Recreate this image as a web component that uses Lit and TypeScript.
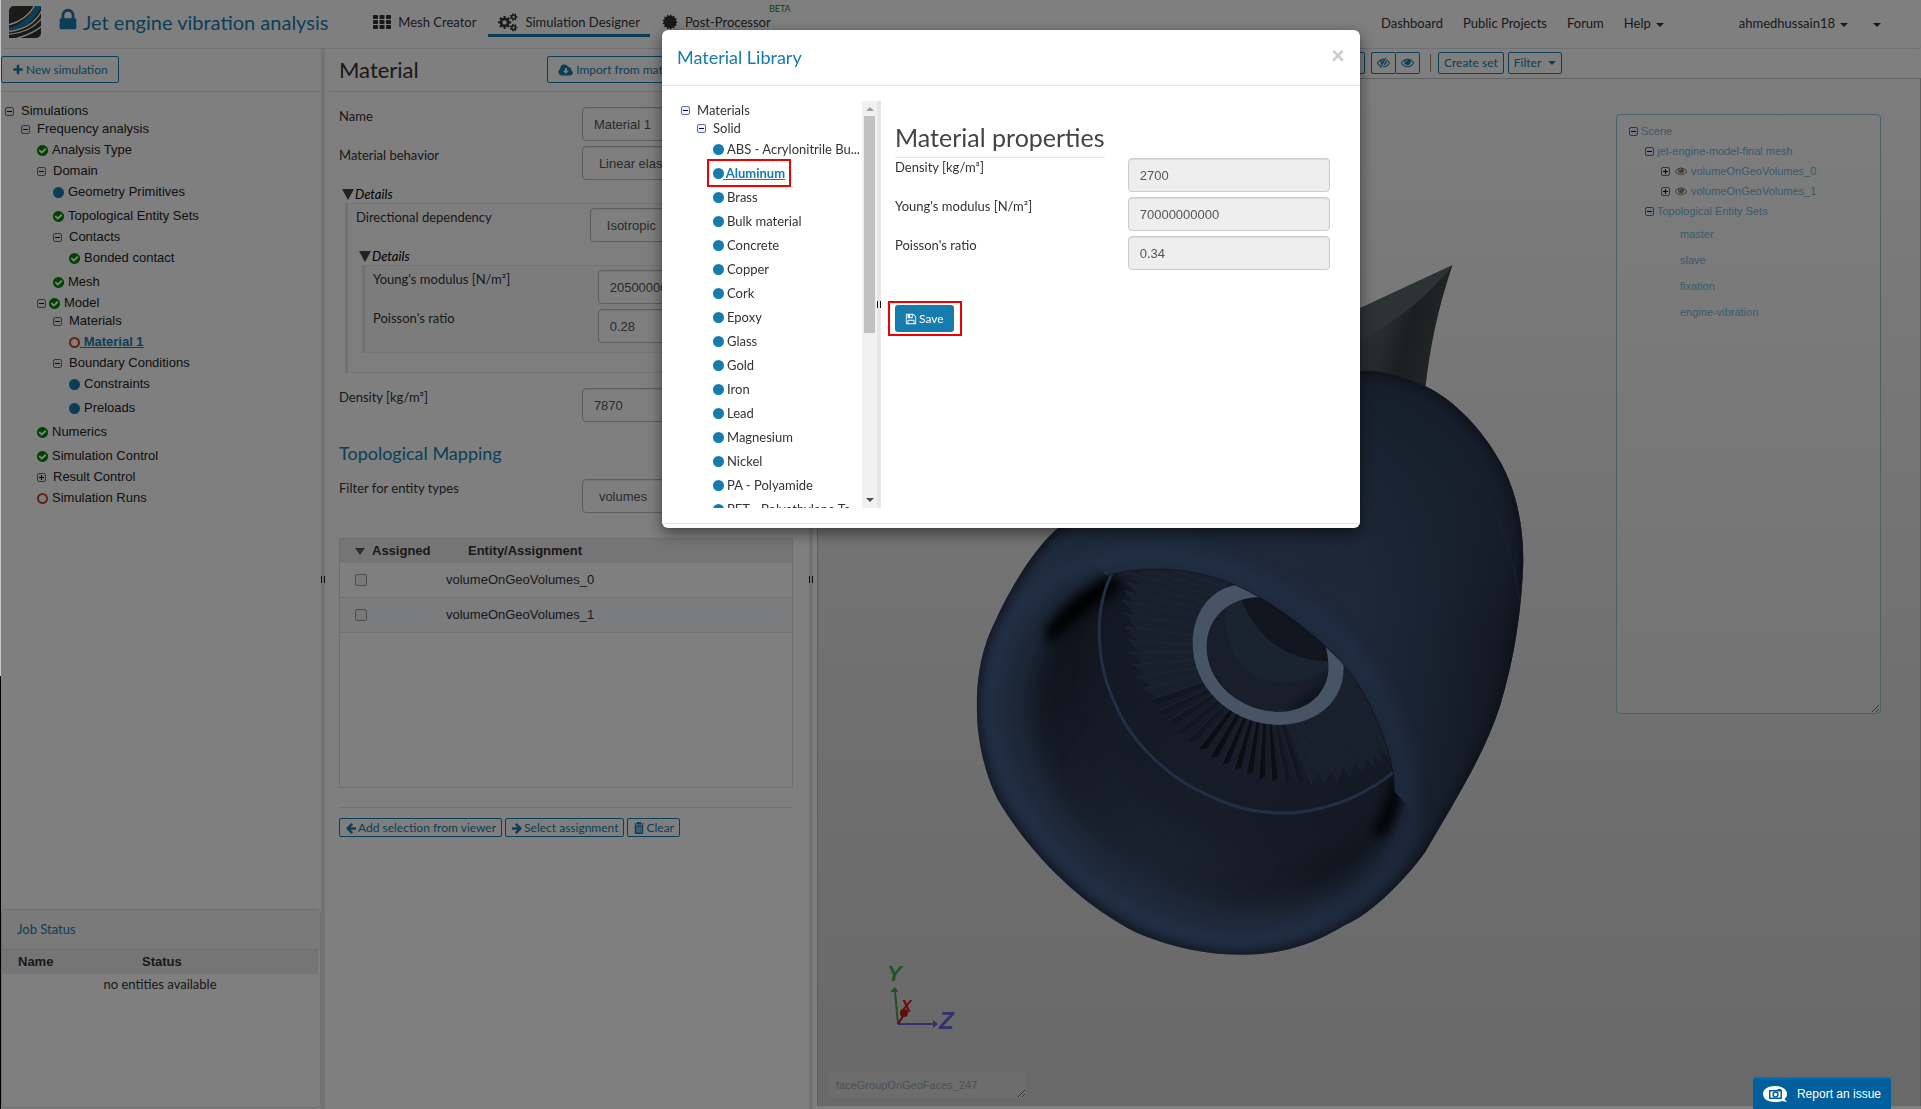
import { LitElement, html, svg, css, nothing } from "lit";
import { customElement } from "lit/decorators.js";

type Mark = "ok" | "dot" | "ring" | "eye";
interface Row {
  level: number;
  label: string;
  toggle?: "minus" | "plus";
  mark?: Mark;
  active?: boolean;
  boxed?: boolean;
}

const SIM_TREE: Row[] = [
  { level: 0, label: "Simulations", toggle: "minus" },
  { level: 1, label: "Frequency analysis", toggle: "minus" },
  { level: 2, label: "Analysis Type", mark: "ok" },
  { level: 2, label: "Domain", toggle: "minus" },
  { level: 3, label: "Geometry Primitives", mark: "dot" },
  { level: 3, label: "Topological Entity Sets", mark: "ok" },
  { level: 3, label: "Contacts", toggle: "minus" },
  { level: 4, label: "Bonded contact", mark: "ok" },
  { level: 3, label: "Mesh", mark: "ok" },
  { level: 2, label: "Model", toggle: "minus", mark: "ok" },
  { level: 3, label: "Materials", toggle: "minus" },
  { level: 4, label: "Material 1", mark: "ring", active: true },
  { level: 3, label: "Boundary Conditions", toggle: "minus" },
  { level: 4, label: "Constraints", mark: "dot" },
  { level: 4, label: "Preloads", mark: "dot" },
  { level: 2, label: "Numerics", mark: "ok" },
  { level: 2, label: "Simulation Control", mark: "ok" },
  { level: 2, label: "Result Control", toggle: "plus" },
  { level: 2, label: "Simulation Runs", mark: "ring" },
];

const LIBRARY: Row[] = [
  { level: 0, label: "Materials", toggle: "minus" },
  { level: 1, label: "Solid", toggle: "minus" },
  ...[
    "ABS - Acrylonitrile Bu...", "Aluminum", "Brass", "Bulk material", "Concrete", "Copper", "Cork",
    "Epoxy", "Glass", "Gold", "Iron", "Lead", "Magnesium", "Nickel", "PA - Polyamide",
    "PET - Polyethylene Te...",
  ].map((label): Row => ({
    level: 2, label, mark: "dot", active: label === "Aluminum", boxed: label === "Aluminum",
  })),
];

const SCENE: Row[] = [
  { level: 0, label: "Scene", toggle: "minus" },
  { level: 1, label: "jet-engine-model-final mesh", toggle: "minus" },
  { level: 2, label: "volumeOnGeoVolumes_0", toggle: "plus", mark: "eye" },
  { level: 2, label: "volumeOnGeoVolumes_1", toggle: "plus", mark: "eye" },
  { level: 1, label: "Topological Entity Sets", toggle: "minus" },
  { level: 2, label: "master" },
  { level: 2, label: "slave" },
  { level: 2, label: "fixation" },
  { level: 2, label: "engine-vibration" },
];

/* ---------- icons ---------- */

const P = {
  lock: "M640 768h512v-192q0-106-75-181t-181-75-181 75-75 181v192zm832 96v576q0 40-28 68t-68 28h-960q-40 0-68-28t-28-68v-576q0-40 28-68t68-28h32v-192q0-184 132-316t316-132 316 132 132 316v192h32q40 0 68 28t28 68z",
  plus: "M1600 736v192q0 40-28 68t-68 28h-416v416q0 40-28 68t-68 28h-192q-40 0-68-28t-28-68v-416h-416q-40 0-68-28t-28-68v-192q0-40 28-68t68-28h416v-416q0-40 28-68t68-28h192q40 0 68 28t28 68v416h416q40 0 68 28t28 68z",
  ok: "M1412 734q0-28-18-46l-91-90q-19-19-45-19t-45 19l-408 407-226-226q-19-19-45-19t-45 19l-91 90q-18 18-18 46 0 27 18 45l362 362q19 19 45 19 27 0 46-19l543-543q18-18 18-45zm252 162q0 209-103 385.5t-279.5 279.5-385.5 103-385.5-103-279.5-279.5-103-385.5 103-385.5 279.5-279.5 385.5-103 385.5 103 279.5 279.5 103 385.5z",
  eye: "M1664 960q-152-236-381-353 61 104 61 225 0 185-131.5 316.5t-316.5 131.5-316.5-131.5-131.5-316.5q0-121 61-225-229 117-381 353 133 205 333.5 326.5t434.5 121.5 434.5-121.5 333.5-326.5zm-720-384q0-20-14-34t-34-14q-125 0-214.5 89.5t-89.5 214.5q0 20 14 34t34 14 34-14 14-34q0-86 61-147t147-61q20 0 34-14t14-34zm848 384q0 34-20 69-140 230-376.5 368.5t-499.5 138.5-499.5-139-376.5-368q-20-35-20-69t20-69q140-229 376.5-368t499.5-139 499.5 139 376.5 368q20 35 20 69z",
  save: "M512 1536h768v-384h-768v384zm896 0h128v-896q0-14-10-38.5t-20-34.5l-281-281q-10-10-34-20t-39-10v416q0 40-28 68t-68 28h-576q-40 0-68-28t-28-68v-416h-128v1280h128v-416q0-40 28-68t68-28h832q40 0 68 28t28 68v416zm-384-928v-320q0-13-9.5-22.5t-22.5-9.5h-192q-13 0-22.5 9.5t-9.5 22.5v320q0 13 9.5 22.5t22.5 9.5h192q13 0 22.5-9.5t9.5-22.5zm640 32v928q0 40-28 68t-68 28h-1344q-40 0-68-28t-28-68v-1344q0-40 28-68t68-28h928q40 0 88 20t76 48l280 280q28 28 48 76t20 88z",
  left: "M1664 896v128q0 53-32.5 90.5t-84.5 37.5h-704l293 294q38 36 38 90t-38 90l-75 76q-37 37-90 37-52 0-91-37l-651-652q-37-37-37-90 0-52 37-91l651-650q38-38 91-38 52 0 90 38l75 74q38 38 38 91t-38 91l-293 293h704q52 0 84.5 37.5t32.5 90.5z",
};

const fa = (d: string, cls = "i12") =>
  html`<svg class=${cls} viewBox="0 0 1792 1792" fill="currentColor" aria-hidden="true"><path d=${d}></path></svg>`;

/** Closed outline of a toothed wheel with a round hole. */
function gear(cx: number, cy: number, rOut: number, rIn: number, hole: number, teeth: number): string {
  const pts: string[] = [];
  const step = (Math.PI * 2) / teeth;
  for (let i = 0; i < teeth; i++) {
    const a = i * step;
    for (const [r, o] of [[rIn, -0.3], [rOut, -0.2], [rOut, 0.2], [rIn, 0.3]]) {
      pts.push(`${(cx + r * Math.cos(a + o * step)).toFixed(2)} ${(cy + r * Math.sin(a + o * step)).toFixed(2)}`);
    }
  }
  const ring = hole
    ? `M${cx - hole} ${cy}a${hole} ${hole} 0 1 0 ${hole * 2} 0a${hole} ${hole} 0 1 0 ${-hole * 2} 0Z`
    : "";
  return `M${pts.join("L")}Z${ring}`;
}

function burst(cx: number, cy: number, rOut: number, rIn: number, n: number): string {
  const pts: string[] = [];
  for (let i = 0; i < n * 2; i++) {
    const r = i % 2 ? rIn : rOut;
    const a = (Math.PI * i) / n;
    pts.push(`${(cx + r * Math.cos(a)).toFixed(2)} ${(cy + r * Math.sin(a)).toFixed(2)}`);
  }
  return `M${pts.join("L")}Z`;
}

const iconGrid = html`<svg class="i18" viewBox="0 0 18 18" fill="currentColor" aria-hidden="true">
  ${[0, 1, 2].map((r) => [0, 1, 2].map((c) => svg`<rect x=${c * 6.5} y=${2 + r * 5} width="5" height="4" rx="0.8"/>`))}
</svg>`;

const iconGears = html`<svg class="i20" viewBox="0 0 20 20" fill="currentColor" fill-rule="evenodd" aria-hidden="true">
  <path d=${gear(6.6, 10.4, 6.6, 4.8, 2.2, 8)}></path>
  <path d=${gear(15.6, 5, 3.9, 2.8, 1.2, 7)}></path>
  <path d=${gear(15.6, 15.6, 3.9, 2.8, 1.2, 7)}></path>
</svg>`;

const iconBurst = html`<svg class="i16" viewBox="0 0 16 16" fill="currentColor" aria-hidden="true">
  <path d=${burst(8, 8, 7.8, 6, 13)}></path>
</svg>`;

const iconCloud = html`<svg class="cloud" viewBox="0 0 16 12" aria-hidden="true">
  <path fill="currentColor" d="M3.7 11.5A3.5 3.5 0 0 1 2.2 4.9 4.3 4.3 0 0 1 10.4 3a2.6 2.6 0 0 1 2.7 3.1 2.9 2.9 0 0 1-.5 5.4Z"></path>
  <path fill="#fff" d="M6.9 4h2v2.7h1.9L7.9 9.8 5 6.7h1.9Z"></path>
</svg>`;

const iconTrash = html`<svg class="i12" viewBox="0 0 12 12" aria-hidden="true">
  <path fill="currentColor" fill-rule="evenodd" d="M4 0h4l.6 1.4H11v1.2H1V1.4h2.4ZM1.8 3.2h8.4V11a1 1 0 0 1-1 1H2.8a1 1 0 0 1-1-1ZM3.6 4.6v5.8h.9V4.6Zm2 0v5.8h.9V4.6Zm2 0v5.8h.9V4.6Z"></path>
</svg>`;

const iconEyeSlash = html`<svg class="i13" viewBox="0 0 1792 1792" aria-hidden="true">
  <path fill="currentColor" d=${P.eye}></path>
  <path stroke="#fff" stroke-width="150" d="M1330 300L590 1640"></path>
  <path stroke="currentColor" stroke-width="130" stroke-linecap="round" d="M1220 260L480 1600"></path>
</svg>`;

const logo = html`<svg class="logo" viewBox="0 0 32 32" aria-hidden="true">
  <defs><clipPath id="lg"><path d="M5 0H32V27a5 5 0 0 1-5 5H0V5A5 5 0 0 1 5 0Z"></path></clipPath></defs>
  <g clip-path="url(#lg)">
    <rect width="32" height="32" fill="#37342f"></rect>
    <path d="M27 -1C20 12 11 20 -1 22V27C16 24 27 13 33 -1Z" fill="#167cae"></path>
    <g fill="none" stroke="#fff" stroke-width="1.4">
      <path d="M26 -1C20 10 12 16 -1 19"></path>
      <path d="M33 4C27 16 16 24 -1 25.5"></path>
      <path d="M33 12C26 21 16 27 -1 28.5"></path>
      <path d="M33 20C26 26 16 30 6 33"></path>
    </g>
  </g>
</svg>`;

const toggleIcon = (kind: "minus" | "plus") => html`<button class="toggle" aria-label=${kind === "minus" ? "Collapse" : "Expand"}>
  <svg viewBox="0 0 9 9" aria-hidden="true">
    <rect x="0.5" y="0.5" width="8" height="8" rx="1.5" fill="#f4f4f8" stroke="#6068b0"></rect>
    <path d=${kind === "minus" ? "M2 4.5h5" : "M2 4.5h5M4.5 2v5"} stroke="#000090"></path>
  </svg>
</button>`;

const markIcon = (m: Mark) => {
  if (m === "ok") return html`<span class="mark green">${fa(P.ok, "i13")}</span>`;
  if (m === "eye") return html`<span class="mark eye">${fa(P.eye, "i12")}</span>`;
  return html`<span class="mark"><i class=${m}></i></span>`;
};

const tree = (rows: Row[], cls: string) => html`<ul class="tree ${cls}">
  ${rows.map((r) => html`<li class=${r.toggle ? "branch" : "leaf"} style="--level:${r.level}">
    ${r.toggle ? toggleIcon(r.toggle) : nothing}
    <span class=${r.boxed ? "hit boxed" : "hit"}>
      ${r.mark ? markIcon(r.mark) : nothing}
      <a href="#" class=${r.active ? "node active" : "node"}>${r.active ? html`&nbsp;` : nothing}${r.label}</a>
    </span>
  </li>`)}
</ul>`;

/* ---------- 3D scene ---------- */

const TIPS = [[1180, 545], [1150, 555], [1128, 573], [1121, 600], [1126, 640], [1135, 677], [1156, 712], [1186, 741],
  [1221, 765], [1258, 780], [1298, 786], [1337, 781], [1375, 768], [1395, 750], [1412, 722], [1415, 690]];
const ROOTS = [[1238, 580], [1230, 583], [1215, 596], [1201, 618], [1193, 645], [1196, 668], [1206, 689], [1222, 706],
  [1242, 718], [1262, 724], [1280, 725], [1300, 721], [1318, 711], [1330, 698], [1338, 680], [1342, 663]];

function along(line: number[][], t: number): number[] {
  const i = Math.min(Math.floor(t), line.length - 2);
  const f = t - i;
  return [line[i][0] + (line[i + 1][0] - line[i][0]) * f, line[i][1] + (line[i + 1][1] - line[i][1]) * f];
}

function blades() {
  const out = [];
  const step = 1 / 3;
  for (let t = 0; t < TIPS.length - 1 - step; t += step) {
    const a = along(TIPS, t);
    const b = along(TIPS, t + step);
    const ra = along(ROOTS, t);
    const rb = along(ROOTS, t + step);
    const s = [b[0] + (rb[0] - b[0]) * 0.16, b[1] + (rb[1] - b[1]) * 0.16];
    const dark = t > 5.4 && t < 10.2;
    if (dark) {
      const m = [(ra[0] + rb[0]) / 2, (ra[1] + rb[1]) / 2];
      out.push(svg`<path d="M${a[0]} ${a[1]}L${ra[0]} ${ra[1]}L${m[0]} ${m[1]}L${(a[0] + s[0]) / 2} ${(a[1] + s[1]) / 2}Z" fill=${t > 7 && t < 9.4 ? "#141a24" : "#222c3e"}/>`);
    } else {
      out.push(svg`<path d="M${a[0]} ${a[1]}L${ra[0]} ${ra[1]}L${rb[0]} ${rb[1]}L${s[0]} ${s[1]}Z" fill="#304058"/>`);
    }
    out.push(svg`<path d="M${a[0]} ${a[1]}L${ra[0]} ${ra[1]}" stroke="#3e526c" stroke-width="0.8"/>`);
  }
  return out;
}

const BODY = "M1340 374C1352 371 1365 370 1375 371C1393 373 1410 379 1425 386C1462 404 1488 440 1500 462C1518 495 1523 530 1523 563C1521 610 1515 655 1500 705C1484 755 1455 800 1425 852C1405 880 1370 915 1345 925C1310 947 1275 955 1241 955C1200 955 1165 945 1136 933C1080 905 1030 855 997 800C982 770 976 735 976 707C976 665 985 640 995 620C1005 597 1030 552 1055 530C1120 480 1200 400 1340 374Z";
const LIP = "M1106 576L1112 574C1150 565 1195 568 1235 585C1275 603 1315 635 1341 662C1370 697 1387 740 1393 775L1394 792";

const engine = html`<svg class="engine" viewBox="817 79 1103 1027" role="img" aria-label="Jet engine model">
  <defs>
    <linearGradient id="bodyFill" gradientUnits="userSpaceOnUse" x1="1180" y1="600" x2="1530" y2="640">
      <stop offset="0" stop-color="#3c5476"></stop>
      <stop offset="0.5" stop-color="#3a5072"></stop>
      <stop offset="0.72" stop-color="#324460"></stop>
      <stop offset="0.9" stop-color="#283446"></stop>
      <stop offset="1" stop-color="#1c2636"></stop>
    </linearGradient>
    <linearGradient id="topShade" gradientUnits="userSpaceOnUse" x1="1400" y1="380" x2="1340" y2="600">
      <stop offset="0" stop-color="#283850" stop-opacity="0.9"></stop>
      <stop offset="1" stop-color="#344862" stop-opacity="0"></stop>
    </linearGradient>
    <linearGradient id="cone" gradientUnits="userSpaceOnUse" x1="1362" y1="330" x2="1435" y2="350">
      <stop offset="0" stop-color="#525e60"></stop>
      <stop offset="0.3" stop-color="#4c5658"></stop>
      <stop offset="0.6" stop-color="#363e3e"></stop>
      <stop offset="1" stop-color="#424a4c"></stop>
    </linearGradient>
    <linearGradient id="inside" gradientUnits="userSpaceOnUse" x1="1015" y1="640" x2="1370" y2="900">
      <stop offset="0" stop-color="#181e2a"></stop>
      <stop offset="0.3" stop-color="#2c384e"></stop>
      <stop offset="0.55" stop-color="#344460"></stop>
      <stop offset="0.8" stop-color="#2c364a"></stop>
      <stop offset="1" stop-color="#161b26"></stop>
    </linearGradient>
    <clipPath id="bodyClip"><path d=${BODY}></path></clipPath>
    <clipPath id="mouthClip"><path d="${LIP}L1440 840V970H950V530H1060Z"></path></clipPath>
    <filter id="b4" x="-50%" y="-50%" width="200%" height="200%"><feGaussianBlur stdDeviation="4"></feGaussianBlur></filter>
    <filter id="b6" x="-100%" y="-50%" width="300%" height="200%"><feGaussianBlur stdDeviation="6"></feGaussianBlur></filter>
    <filter id="b9" x="-50%" y="-50%" width="200%" height="200%"><feGaussianBlur stdDeviation="9"></feGaussianBlur></filter>
    <filter id="b12" x="-50%" y="-50%" width="200%" height="200%"><feGaussianBlur stdDeviation="12"></feGaussianBlur></filter>
  </defs>
  <path d="M1452 265L1340 317V390L1425 387C1430 345 1437 310 1452 265Z" fill="url(#cone)"></path>
  <path d="M1452 265L1340 317V350C1385 330 1425 300 1452 265Z" fill="#5a6668"></path>
  <path d=${BODY} fill="url(#bodyFill)"></path>
  <g clip-path="url(#bodyClip)">
    <path d="M1000 360H1560V640H1000Z" fill="url(#topShade)"></path>
    <path d=${BODY} fill="none" stroke="#1a2436" stroke-width="8" filter="url(#b4)"></path>
    <path d="M1340 390C1430 405 1500 470 1519 600" fill="none" stroke="#34485e" stroke-width="1"></path>
    <path d="M1110 558C1210 548 1270 582 1330 630C1390 690 1410 760 1404 830C1380 900 1300 940 1230 942C1130 933 1012 840 990 730C984 670 1000 620 1050 575Z" fill="none" stroke="#46669a" stroke-width="14" filter="url(#b9)" opacity="0.75"></path>
  </g>
  <g clip-path="url(#mouthClip)">
    <path d="M1040 655C1055 615 1085 592 1118 578L1150 560L1260 570L1420 700L1400 780C1388 860 1340 905 1250 908C1170 905 1095 860 1055 795C1028 745 1022 700 1040 655Z" fill="url(#inside)" filter="url(#b12)"></path>
    <path d="M1100 610C1200 540 1420 640 1396 775L1370 830C1320 870 1200 860 1130 790C1090 730 1080 670 1100 610Z" fill="#2a364c" opacity="0.7" filter="url(#b9)"></path>
    <path d="M1048 632C1064 606 1086 590 1112 578L1116 586C1094 600 1074 616 1050 638Z" fill="#000" stroke="#000" stroke-width="8" filter="url(#b6)"></path>
    <path d="M1396 778C1392 800 1386 816 1376 832L1382 832C1392 816 1397 804 1398 778Z" fill="#000" stroke="#000" stroke-width="7" filter="url(#b6)"></path>
    <path d="M1112 572C1092 610 1095 665 1116 707C1130 742 1170 780 1207 795C1240 812 1268 814 1295 813C1335 808 1365 795 1396 770" fill="none" stroke="#42608a" stroke-width="3"></path>
    ${blades()}
    <path d="M1206 647C1204 620 1225 597 1262 597L1300 610L1328 640C1333 690 1308 712 1276 712C1240 708 1208 680 1206 647Z" fill="#303e54"></path>
    <path d="M1226 606C1224 640 1232 660 1250 674C1280 690 1310 682 1328 668L1330 640L1262 592Z" fill="#344660"></path>
    <path d="M1240 597C1255 640 1290 662 1330 661L1320 620L1262 590Z" fill="#222a3c"></path>
    <path d="M1328 674C1322 698 1305 712 1286 711C1304 702 1320 690 1328 674Z" fill="#10161f" filter="url(#b4)"></path>
    <path fill="#8ca8cc" fill-rule="evenodd" d="M1235 585C1208 590 1192 615 1192 643C1192 690 1232 724 1278 725C1318 724 1345 700 1343 664L1324 641C1330 665 1330 680 1318 695C1306 708 1292 712 1276 712C1238 710 1206 682 1206 647C1206 618 1228 596 1263 597Z"></path>
  </g>
  <path d=${LIP} fill="none" stroke="#1c2638" stroke-width="1" opacity="0.7"></path>
</svg>`;

const triad = html`<svg class="triad" viewBox="0 0 72 72" role="img" aria-label="Axes X Y Z">
  <g fill="none" stroke-width="2">
    <path d="M11 61L8 28" stroke="#44a048"></path>
    <path d="M11 61H47" stroke="#6464d8"></path>
    <path d="M11 61L18 50" stroke="#a01818"></path>
  </g>
  <path d="M4 29Q8 20 11 29Z" fill="#44a048"></path>
  <path d="M46 57L51 61L46 65Z" fill="#6464d8"></path>
  <circle cx="17" cy="50" r="4" fill="#b81c1c"></circle>
  <g class="axis">
    <text x="0" y="18" font-size="22" fill="#40a844">Y</text>
    <text x="14" y="49" font-size="16" fill="#e01414">X</text>
    <text x="52" y="66" font-size="24" fill="#6464dc">Z</text>
  </g>
</svg>`;

/* ---------- form helpers ---------- */

const field = (id: string, label: string, value: string, opts: { select?: boolean; disabled?: boolean } = {}) => html`
  <div class="field">
    <label for=${id}>${label}</label>
    ${opts.select
      ? html`<select id=${id}><option>${value}</option></select>`
      : html`<input id=${id} type="text" .value=${value} ?disabled=${!!opts.disabled}>`}
  </div>`;

const caret = html`<i class="caret"></i>`;

@customElement("app-root")
export class AppRoot extends LitElement {
  static styles = css`
    :host {
      --blue: #167cae;
      display: block;
      font: 13px/18px Lato, "Liberation Sans", sans-serif;
      color: #333;
    }
    *, *::before, *::after { box-sizing: border-box; }
    a { color: inherit; text-decoration: none; }
    button, input, select { font: inherit; color: inherit; margin: 0; }
    svg { flex: none; display: block; }
    .i12 { width: 12px; height: 12px; }
    .i13 { width: 13px; height: 13px; }
    .i16 { width: 16px; height: 16px; }
    .i18 { width: 18px; height: 18px; }
    .i20 { width: 20px; height: 20px; }
    .cloud { width: 16px; height: 12px; }
    .caret { display: inline-block; border: 4px solid transparent; border-top-color: currentColor; border-bottom: 0; margin-left: 5px; vertical-align: middle; }

    .page { display: flex; flex-direction: column; min-height: 100vh; background: #fff; margin-left: 1px; }
    .edge { position: fixed; left: 0; top: 0; bottom: 0; width: 1px; background: linear-gradient(#c8c8c8 0 61%, #000 61%); z-index: 5; }
    .backdrop { position: fixed; inset: 0 0 0 1px; background: rgba(0, 0, 0, 0.5); z-index: 10; }

    header { display: flex; align-items: center; height: 49px; padding: 0 40px 4px 8px; border-bottom: 1px solid #e0e0e0; border-radius: 4px; }
    .logo { width: 32px; height: 32px; margin-right: 14px; }
    .lock { width: 26px; height: 26px; margin-right: 2px; margin-bottom: 4px; color: var(--blue); }
    .title { margin: 0; font-size: 20px; line-height: 26px; font-weight: 400; color: var(--blue); }
    .tabs { display: flex; gap: 2px; margin-left: 35px; align-items: stretch; align-self: flex-start; }
    .tabs a { display: flex; align-items: center; gap: 7px; padding: 9px 10px 0; border-bottom: 3px solid transparent; height: 37px; position: relative; }
    .tabs a.on { border-color: var(--blue); }
    .tabs .beta { position: absolute; right: -10px; top: 2px; font-size: 9px; line-height: 14px; color: #0a8a0a; }
    .links { display: flex; margin-left: auto; margin-top: 2px; gap: 20px; }
    .links .user { margin-left: 55px; }

    .main { flex: 1; display: grid; grid-template-columns: 320fr 4px 484fr 4px 1108fr; }
    .split { background: #e6e6e6; display: flex; align-items: center; justify-content: center; }
    .split::after { content: ""; width: 4px; height: 7px; border: solid #111; border-width: 0 1px; }
    .col { display: flex; flex-direction: column; min-width: 0; }
    .head { display: flex; align-items: center; height: 43px; padding-bottom: 1px; border-bottom: 1px solid #e4e4e4; }
    .head h2 { margin-right: auto; }
    .btn { display: inline-flex; align-items: center; gap: 2px; border: 1px solid var(--blue); border-radius: 2px; background: transparent; color: var(--blue); font-size: 12px; line-height: 18px; padding: 3px 10px; height: 27px; white-space: nowrap; }
    .btn.sm { height: 19px; padding: 0 5px; gap: 1px; }
    .btn.md { height: 22px; padding: 0 5px; }

    .tree { list-style: none; margin: 0; padding: 0; font: 13px/18px "Liberation Sans", Arial, sans-serif; color: #222; }
    .tree li { display: flex; align-items: center; padding-left: calc(4px + var(--level) * 16px); white-space: nowrap; }
    .branch { height: 18px; }
    .leaf { height: 24px; }
    .toggle { display: flex; width: 9px; height: 9px; margin-right: 7px; padding: 0; border: 0; background: none; }
    .toggle svg { width: 9px; height: 9px; }
    .hit { display: flex; align-items: center; }
    .mark { display: flex; align-items: center; justify-content: center; width: 11px; margin-right: 4px; }
    .branch .mark { margin-left: -4px; }
    .green { color: #008800; }
    .dot, .ring { width: 11px; height: 11px; border-radius: 50%; background: var(--blue); }
    .ring { background: none; border: 2px solid #c8441c; }
    .node.active { color: var(--blue); font-weight: 700; text-decoration: underline; margin-left: -4px; }
    .sims { flex: 1; padding-top: 10px; }

    .job { min-height: 199px; margin-bottom: 1px; border: 1px solid #dcdcdc; border-radius: 4px; }
    .job h3 { margin: 0; padding: 10px 15px; height: 40px; font-size: 13px; line-height: 18px; font-weight: 400; color: var(--blue); background: #f5f5f5; border-bottom: 1px solid #ddd; }
    table { border-collapse: separate; border-spacing: 0; width: 100%; table-layout: fixed; font: 13px/18px "Liberation Sans", Arial, sans-serif; }
    th, td { text-align: left; padding: 0; font-weight: 400; }
    th { height: 25px; background: #ebebeb; font-weight: 700; color: #333; }
    .job table { width: calc(100% - 2px); }
    .job .c1 { width: 124px; }
    .job th { padding-left: 16px; height: 24px; }
    .job td { text-align: center; font: 13px/18px Lato, sans-serif; height: 20px; }

    .props { padding: 0 16px 0 14px; }
    .col > .props.head { padding: 0 16px 1px 10px; margin-left: 4px; }
    h2 { margin: 0; font-size: 22px; line-height: 28px; font-weight: 400; color: #333; }
    .form { padding-top: 15px; }
    .field { display: grid; grid-template-columns: 535fr 465fr; height: 34px; }
    .field + .field { margin-top: 5px; }
    .field input, .field select { min-width: 0; width: 100%; height: 34px; border: 1px solid #bbb; border-radius: 4px; background: #fff; padding: 1px 11px; font: 13px/18px "Liberation Sans", Arial, sans-serif; color: #555; box-shadow: inset 0 1px 1px rgba(0, 0, 0, 0.08); }
    .field select { padding-left: 12px; }
    .field input:disabled { background: #eee; border-color: #ccc; }
    details { margin-top: 5px; }
    summary { display: flex; align-items: center; gap: 1px; margin-left: 3px; line-height: 18px; height: 18px; color: #000; font-size: 13px; font-style: italic; list-style: none; }
    summary::before { content: ""; border: 6px solid transparent; border-top: 11px solid #444; border-bottom: 0; }
    .nest { margin-left: 6px; border: 1px solid #e8e8e8; border-right: 0; border-left: 3px solid #e2e2e2; padding: 4px 0 19px 8px; background: #fdfdfd; }
    .nest .nest { padding-bottom: 9px; background: #f9f9f9; }
    .gap { margin-top: 15px; }
    h4 { margin: 18px 0 12px; font-size: 18px; line-height: 27px; font-weight: 400; color: var(--blue); }
    .grid { margin-top: 25px; height: 250px; border: 1px solid #ddd; }
    .grid .c1 { width: 97px; }
    .grid th { color: #333; height: 24px; }
    .grid th:first-child, .grid td:first-child { padding-left: 15px; }
    .grid th i { display: inline-block; border: 5px solid transparent; border-top: 7px solid #555d66; border-bottom: 0; margin-right: 7px; }
    .grid th + th { padding-left: 31px; }
    .grid td { height: 35px; border-bottom: 1px solid #e2e2e2; color: #333; }
    .grid td + td { padding-left: 9px; }
    .grid tr.alt td { background: #f6f8fc; }
    .grid input { display: block; width: 12px; height: 12px; margin: 0; appearance: none; border: 1px solid #9a9a9a; border-radius: 2px; background: #f0f0f0; }
    .actions { display: flex; gap: 3px; margin-top: 19px; border-top: 1px solid #e4e4e4; padding-top: 10px; }

    .view { padding-left: 4px; }
    .tools { display: flex; align-items: center; height: 30px; padding: 0 0 2px 520px; gap: 6px; border-bottom: 1px solid #c4c4c4; }
    .tools .pair { display: flex; }
    .tools .pair .btn + .btn { border-left: 0; border-radius: 0 2px 2px 0; }
    .tools hr { width: 1px; height: 18px; margin: 0 1px 0 4px; border: 0; background: #a89070; }
    .tools .btn + .btn { margin-left: -2px; }
    .tools .pair .btn + .btn { margin-left: 0; }
    .canvas { position: relative; flex: 1; margin-bottom: 3px; border: solid #bbb; border-width: 0 1px; background: linear-gradient(#fbfbfb, #e0e0e0 60%, #d2d2d2); overflow: hidden; }
    .engine { position: absolute; inset: 0; width: 100%; height: 100%; }
    .triad { position: absolute; left: 69px; bottom: 71px; width: 72px; height: 72px; overflow: visible; }
    .axis { font-family: "Liberation Sans", Arial, sans-serif; font-style: italic; font-weight: 700; }
    .scene { position: absolute; right: 39px; top: 35px; width: 265px; height: 600px; padding: 6px 0 0 8px; border: 1px solid #90c4cc; border-radius: 4px; background: rgba(255, 255, 255, 0.25); resize: both; overflow: hidden; }
    .tree.outline { font-size: 11px; color: #74b4d8; }
    .outline li { height: 20px; }
    .outline .toggle { margin-right: 3px; }
    .outline .leaf { height: 26px; padding-left: 55px; }
    .outline .branch .mark { margin: 0 5px 0 2px; color: #888070; }
    .pick { position: absolute; left: 10px; bottom: 8px; width: 198px; height: 26px; padding: 4px 8px; font: 11px/18px "Liberation Sans", Arial, sans-serif; color: #90a4ac; background: rgba(255, 255, 255, 0.2); border-radius: 3px; resize: both; overflow: hidden; }

    .stage { position: fixed; inset: 0; z-index: 20; display: flex; justify-content: center; align-items: flex-start; padding: 30px 0 0 101px; }
    .modal { width: 698px; max-width: 100%; background: #fff; border-radius: 6px; box-shadow: 0 5px 15px rgba(0, 0, 0, 0.5), 0 0 1px rgba(0, 0, 0, 0.5); }
    .modal .bar { display: flex; align-items: center; justify-content: space-between; height: 56px; padding: 0 15px 2px; border-bottom: 1px solid #e5e5e5; }
    .modal h3 { margin: 0; font-size: 18px; line-height: 26px; font-weight: 400; color: var(--blue); }
    .close { border: 0; background: none; padding: 0 0 3px; font: 900 24px/22px Lato, sans-serif; color: #ccc; }
    .split-body { display: grid; grid-template-columns: 185px 15px 4px 1fr; height: 407px; margin: 15px; }
    .pane { overflow: hidden; }
    .tree.lib { font: 13px/18px Lato, sans-serif; color: #333; }
    .lib .leaf .mark { margin-right: 3px; }
    .boxed { position: relative; }
    .boxed::after, .save-wrap::after { content: ""; position: absolute; inset: -5px -6px; border: 2px solid #f00000; }
    .bar-v { background: #f1f1f1; display: flex; flex-direction: column; align-items: center; justify-content: space-between; padding: 6px 0; position: relative; }
    .bar-v .up { border: 4px solid transparent; border-bottom-color: #a0a0a0; border-top: 0; }
    .bar-v .down { border: 4px solid transparent; border-top-color: #505050; border-bottom: 0; }
    .bar-v .thumb { width: 11px; height: 217px; margin: 5px 0 auto; background: #c1c1c1; }
    .detail { padding: 18px 15px 0 14px; }
    .detail h2 { display: inline-block; font-size: 25px; line-height: 36px; padding: 0 0 2px; border-bottom: 1px solid #e5e5e5; color: #444; }
    .save-wrap { position: relative; display: inline-block; margin-top: 35px; }
    .save-wrap::after { inset: -4px -8px -4px -7px; pointer-events: none; }
    .save { display: flex; align-items: center; gap: 2px; height: 27px; padding: 0 10px; border: 0; border-radius: 3px; background: var(--blue); color: #fff; font-size: 12px; }
    .foot { height: 5px; border-top: 1px solid #e5e5e5; }

    .report { position: fixed; right: 30px; bottom: 0; z-index: 30; display: flex; align-items: center; gap: 10px; height: 32px; padding: 0 10px; border: 0; border-top: 2px solid #0070b8; border-radius: 3px 3px 0 0; background: #005f9c; color: #fff; font: 12px/18px "Liberation Sans", Arial, sans-serif; }
    .report svg { width: 24px; height: 16px; }
  `;

  private renderHeader() {
    return html`<header>
      ${logo}
      ${fa(P.lock, "lock")}
      <h1 class="title">Jet engine vibration analysis</h1>
      <nav class="tabs">
        <a href="#">${iconGrid}<span>Mesh Creator</span></a>
        <a href="#" class="on">${iconGears}<span>Simulation Designer</span></a>
        <a href="#">${iconBurst}<span>Post-Processor</span><span class="beta">BETA</span></a>
      </nav>
      <nav class="links">
        <a href="#">Dashboard</a>
        <a href="#">Public Projects</a>
        <a href="#">Forum</a>
        <a href="#">Help${caret}</a>
        <a href="#" class="user">ahmedhussain18${caret}</a>
        <a href="#" aria-label="More">${caret}</a>
      </nav>
    </header>`;
  }

  private renderLeft() {
    return html`<aside class="col">
      <div class="head"><button class="btn">${fa(P.plus, "i12")}New simulation</button></div>
      ${tree(SIM_TREE, "sims")}
      <section class="job">
        <h3>Job Status</h3>
        <table>
          <colgroup><col class="c1"><col></colgroup>
          <thead><tr><th>Name</th><th>Status</th></tr></thead>
          <tbody><tr><td colspan="2">no entities available</td></tr></tbody>
        </table>
      </section>
    </aside>`;
  }

  private renderProperties() {
    return html`<section class="col">
      <div class="props head">
        <h2>Material</h2>
        <button class="btn">${iconCloud}Import from material library</button>
        <button class="btn">${fa(P.save)}Save</button>
      </div>
      <div class="props form">
        ${field("name", "Name", "Material 1")}
        ${field("behavior", "Material behavior", "Linear elastic", { select: true })}
        <details open>
          <summary>Details</summary>
          <div class="nest">
            ${field("direction", "Directional dependency", "Isotropic", { select: true })}
            <details open>
              <summary>Details</summary>
              <div class="nest">
                ${field("young", "Young's modulus [N/m²]", "205000000000")}
                ${field("poisson", "Poisson's ratio", "0.28")}
              </div>
            </details>
          </div>
        </details>
        <div class="gap">${field("density", "Density [kg/m³]", "7870")}</div>
        <h4>Topological Mapping</h4>
        ${field("filter", "Filter for entity types", "volumes", { select: true })}
        <div class="grid">
          <table>
            <colgroup><col class="c1"><col></colgroup>
            <thead><tr><th><i></i>Assigned</th><th>Entity/Assignment</th></tr></thead>
            <tbody>
              ${["volumeOnGeoVolumes_0", "volumeOnGeoVolumes_1"].map((v, i) => html`
                <tr class=${i % 2 ? "alt" : ""}>
                  <td><input type="checkbox" id="v${i}"></td>
                  <td><label for="v${i}">${v}</label></td>
                </tr>`)}
            </tbody>
          </table>
        </div>
        <div class="actions">
          <button class="btn sm">${fa(P.left)}Add selection from viewer</button>
          <button class="btn sm"><svg class="i12" viewBox="0 0 1792 1792" fill="currentColor" aria-hidden="true"><path transform="matrix(-1 0 0 1 1792 0)" d=${P.left}></path></svg>Select assignment</button>
          <button class="btn sm">${iconTrash}Clear</button>
        </div>
      </div>
    </section>`;
  }

  private renderViewer() {
    return html`<section class="col view">
      <div class="tools">
        <button class="btn md" aria-label="Reset view">${iconBurst}</button>
        <span class="pair">
          <button class="btn md" aria-label="Hide">${iconEyeSlash}</button>
          <button class="btn md" aria-label="Show">${fa(P.eye, "i13")}</button>
        </span>
        <hr>
        <button class="btn md">Create set</button>
        <button class="btn md">Filter${caret}</button>
      </div>
      <div class="canvas">
        ${engine}
        ${triad}
        <div class="scene">${tree(SCENE, "outline")}</div>
        <div class="pick">faceGroupOnGeoFaces_247</div>
      </div>
    </section>`;
  }

  private renderModal() {
    return html`<div class="stage"><div class="modal" role="dialog" aria-label="Material Library">
      <div class="bar"><h3>Material Library</h3><button class="close" aria-label="Close">×</button></div>
      <div class="split-body">
        <div class="pane">${tree(LIBRARY, "lib")}</div>
        <div class="bar-v" aria-hidden="true"><i class="up"></i><i class="thumb"></i><i class="down"></i></div>
        <div class="split"></div>
        <div class="detail">
          <h2>Material properties</h2>
          ${field("m-density", "Density [kg/m³]", "2700", { disabled: true })}
          ${field("m-young", "Young's modulus [N/m²]", "70000000000", { disabled: true })}
          ${field("m-poisson", "Poisson's ratio", "0.34", { disabled: true })}
          <span class="save-wrap"><button class="save">${fa(P.save)}Save</button></span>
        </div>
      </div>
      <div class="foot"></div>
    </div></div>`;
  }

  render() {
    return html`
      <div class="edge"></div>
      <div class="page">
        ${this.renderHeader()}
        <main class="main">
          ${this.renderLeft()}
          <div class="split"></div>
          ${this.renderProperties()}
          <div class="split"></div>
          ${this.renderViewer()}
        </main>
      </div>
      <div class="backdrop"></div>
      ${this.renderModal()}
      <button class="report">
        <svg viewBox="0 0 24 16" aria-hidden="true">
          <path fill="#fff" d="M12 0c7 0 12 3 12 8 0 2-1 4-2.500 5L24 16l-5-1c-2 .7-4 1-7 1C5 16 0 13 0 8s5-8 12-8Z"></path>
          <path fill="#005f9c" fill-rule="evenodd" d="M6 4h8l1-1h3v1h1v9H6Zm1.500 1.500v6h10v-6Z"></path>
          <circle cx="12.500" cy="8.500" r="2.400" fill="none" stroke="#005f9c" stroke-width="1.500"></circle>
        </svg>
        Report an issue
      </button>`;
  }
}
